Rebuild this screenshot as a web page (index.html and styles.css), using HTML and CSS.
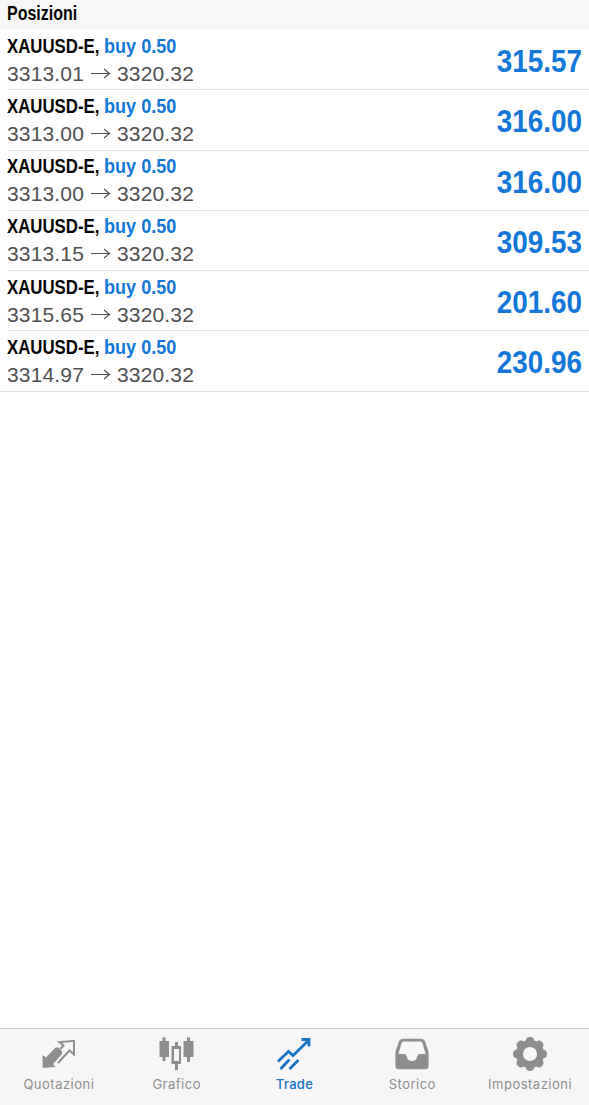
FILE: index.html
```html
<!DOCTYPE html>
<html lang="it">
  <head>
    <meta charset="UTF-8" />
    <title>Trade</title>
    <link rel="stylesheet" href="styles.css">
  </head>
  <body>
    <h1><span>Posizioni</span></h1>

    <ul class="positions" id="positions"></ul>

    <nav class="tabs">
      <a class="tab">
        <svg width="36" height="36" viewBox="0 0 36 36">
          <path d="M1.6 19 5 21.5 14.5 11.5H17.5L21 15V18L12 28 14.5 31 1.6 32Z" fill="currentColor" />
          <path d="M19.5 12.8 22.5 9.5 18.5 6.2 33 4.8V18.5L28.5 14.5 17 27" fill="none" stroke="currentColor" stroke-width="2" />
        </svg>
        <span>Quotazioni</span>
      </a>
      <a class="tab">
        <svg width="36" height="36" viewBox="0 0 36 36">
          <path d="M3.5 1.5h3V5H10v16H6.5v4h-3v-4H.5V5h3zM28 1.5h3V5h3.5v16H31v5h-3v-5h-3.5V5H28z" fill="currentColor" />
          <path d="M16 6h3v4h3v18h-3v6h-3v-6h-3.5V10H16zM15 13v12h5V13z" fill="currentColor" fill-rule="evenodd" />
        </svg>
        <span>Grafico</span>
      </a>
      <a class="tab active">
        <svg width="36" height="36" viewBox="0 0 36 36">
          <path d="M2 25.5 12.5 15.5 17 19.5 33 4M25.5 3.5H33V10.5M4.5 33 13.5 23.5M13.5 33 22.5 24" fill="none" stroke="currentColor" stroke-width="2.8" />
        </svg>
        <span>Trade</span>
      </a>
      <a class="tab">
        <svg width="36" height="36" viewBox="0 0 36 36">
          <path d="M9 2.8H27Q30 2.8 31 5.3L34.6 16V30.3Q34.6 33.3 31.6 33.3H4.4Q1.4 33.3 1.4 30.3V16L5 5.3Q6 2.8 9 2.8ZM9.2 5.4Q8 5.4 7.5 7L4.4 18H10.5Q12 18 12.3 19.5 13.5 25 18 25 22.5 25 23.7 19.5 24 18 25.5 18H31.6L28.5 7Q28 5.4 26.8 5.4Z" fill="currentColor" fill-rule="evenodd" />
        </svg>
        <span>Storico</span>
      </a>
      <a class="tab">
        <svg width="36" height="36" viewBox="-18 -18 36 36">
          <circle r="10.6" fill="none" stroke="currentColor" stroke-width="7" />
          <g fill="currentColor">
            <rect id="tooth" x="-4.2" y="-16.9" width="8.4" height="8" rx="3.8" />
            <use href="#tooth" transform="rotate(45)" />
            <use href="#tooth" transform="rotate(90)" />
            <use href="#tooth" transform="rotate(135)" />
            <use href="#tooth" transform="rotate(180)" />
            <use href="#tooth" transform="rotate(225)" />
            <use href="#tooth" transform="rotate(270)" />
            <use href="#tooth" transform="rotate(315)" />
          </g>
        </svg>
        <span>Impostazioni</span>
      </a>
    </nav>

    <script>
      // open price, current price, profit
      const positions = [
        ['3313.01', '3320.32', '315.57'],
        ['3313.00', '3320.32', '316.00'],
        ['3313.00', '3320.32', '316.00'],
        ['3313.15', '3320.32', '309.53'],
        ['3315.65', '3320.32', '201.60'],
        ['3314.97', '3320.32', '230.96']
      ];
      const arrow =
        '<svg class="arrow" width="20" height="12" viewBox="0 0 20 12"><path d="M0 5.5H18.5M13 1 18.5 5.5 13 10" /></svg>';

      document.getElementById('positions').innerHTML = positions
        .map(function (p) {
          return (
            '<li class="position"><div>' +
            '<div class="deal"><span class="symbol">XAUUSD-E,</span><span class="side">buy 0.50</span></div>' +
            '<div class="prices"><span class="open">' + p[0] + '</span>' + arrow + '<span>' + p[1] + '</span></div>' +
            '</div><span class="profit">' + p[2] + '</span></li>'
          );
        })
        .join('');
    </script>
  </body>
</html>
```
FILE: styles.css
```css
html,
body {
  height: 100%;
  margin: 0;
}

body {
  display: flex;
  flex-direction: column;
  font-family: 'Liberation Sans', Arial, sans-serif;
  color: #050505;
  background: #fff;
  overflow: hidden;
}

h1 {
  height: 29px;
  margin: 0;
  padding-left: 7px;
  font-size: 20px;
  line-height: 26px;
  background: #f7f7f7;
}

h1 span {
  display: inline-block;
  transform: scaleX(0.8);
  transform-origin: left;
}

.positions {
  flex: 1;
  margin: 0;
  padding: 1px 0 0;
  list-style: none;
}

.position {
  display: flex;
  justify-content: space-between;
  box-sizing: border-box;
  height: 60.25px;
  margin-left: 7px;
  padding-right: 7px;
  border-bottom: 1px solid #e0e0e0;
}

.position:last-child {
  margin-left: 0;
  padding-left: 7px;
}

.deal {
  display: flex;
  padding-top: 1.5px;
  font-size: 21px;
  font-weight: bold;
  line-height: 28px;
}

.symbol {
  width: 97px;
  transform: scaleX(0.8);
  transform-origin: left;
  white-space: nowrap;
}

.side {
  color: #1277d8;
  transform: scaleX(0.86);
  transform-origin: left;
}

.prices {
  display: flex;
  align-items: center;
  font-size: 21px;
  line-height: 28px;
  letter-spacing: 0.15px;
  color: #505050;
}

.open {
  width: 84px;
}

.arrow {
  margin-right: 6px;
  fill: none;
  stroke: #505050;
  stroke-width: 1.1;
}

.profit {
  font-size: 32px;
  font-weight: bold;
  line-height: 62px;
  color: #1277d8;
  transform: scaleX(0.87);
  transform-origin: right;
}

.tabs {
  display: grid;
  grid-template-columns: repeat(5, 1fr);
  box-sizing: border-box;
  height: 77px;
  border-top: 1px solid #c9c9c9;
  background: #f6f6f6;
}

.tab {
  display: flex;
  flex-direction: column;
  align-items: center;
  padding-top: 7px;
  font-family: Inter, sans-serif;
  font-size: 13px;
  line-height: 16px;
  letter-spacing: 0.5px;
  color: #8e8e8e;
}

.tab span {
  margin-top: 4px;
}

.active {
  color: #1774c4;
}

.active span {
  font-weight: 500;
  letter-spacing: 0.3px;
}
```
